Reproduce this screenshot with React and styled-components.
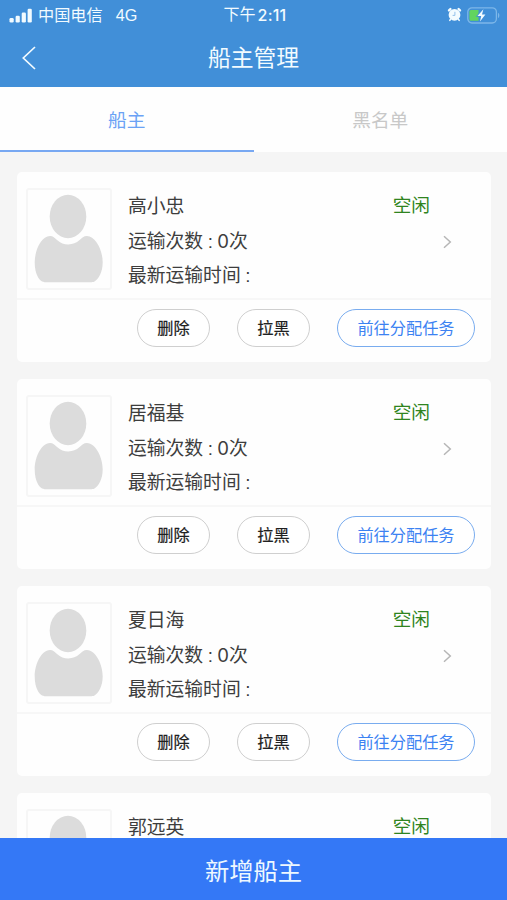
import React from 'react';
import styled, { createGlobalStyle } from 'styled-components';

const GlobalStyle = createGlobalStyle`
  * { box-sizing: border-box; }
  body {
    margin: 0;
    overflow: hidden;
    font-family: "Liberation Sans", "Noto Sans CJK SC", sans-serif;
  }
  button { font: inherit; margin: 0; padding: 0; cursor: pointer; }
`;

const Screen = styled.div`
  width: 100%;
  height: 100vh;
  display: flex;
  flex-direction: column;
  overflow: hidden;
  background: #f5f5f5;
`;

const Header = styled.header`
  flex: none;
  height: 87px;
  background: #418fd8;
  color: #f2fbff;
`;

const StatusBar = styled.div`
  height: 30px;
  padding: 0 7px 0 9px;
  display: grid;
  grid-template-columns: 1fr auto 1fr;
  align-items: center;
`;

const StatusGroup = styled.div`
  display: flex;
  align-items: center;
  justify-content: ${(p) => (p.$end ? 'flex-end' : 'flex-start')};
  gap: ${(p) => (p.$end ? '5px' : '0')};
  font-size: 16.2px;
  line-height: 24px;
  white-space: nowrap;
`;

const Carrier = styled.span`
  margin: 0 13px 0 6px;
`;

const Clock = styled.div`
  display: flex;
  gap: 2px;
  margin-right: -1px;
  font-size: 16px;
  line-height: 24px;
`;

const ClockDigits = styled.span`
  font-family: Inter, sans-serif;
  font-weight: 500;
  letter-spacing: 0.2px;
`;

const NavBar = styled.div`
  height: 56px;
  display: grid;
  grid-template-columns: 1fr auto 1fr;
  align-items: center;
`;

const BackButton = styled.button`
  justify-self: start;
  width: 40px;
  height: 40px;
  margin-left: 9px;
  border: 0;
  background: none;
  color: inherit;
  display: grid;
  place-items: center;
`;

const Title = styled.h1`
  margin: 0;
  font-size: 22.8px;
  font-weight: 400;
  line-height: 32px;
`;

const Tabs = styled.nav`
  flex: none;
  height: 65px;
  display: flex;
  background: #fefefe;
`;

const Tab = styled.button`
  flex: 1;
  border: 0;
  border-bottom: 2px solid ${(p) => (p.$active ? '#78a8f2' : 'transparent')};
  background: none;
  color: ${(p) => (p.$active ? '#6ba2f5' : '#c8c8c8')};
  && { font-size: 18.7px; }
`;

const List = styled.main`
  flex: 1;
  min-height: 0;
  overflow: hidden;
  padding: 20px 16px 0 17px;
  display: flex;
  flex-direction: column;
  gap: 17px;
`;

const Card = styled.article`
  flex: none;
  height: 190px;
  border-radius: 5px;
  background: #fefefe;
`;

const Summary = styled.div`
  height: 128px;
  padding: 16px 39px 0 9px;
  border-bottom: 2px solid #f7f7f7;
  display: flex;
`;

const AvatarFrame = styled.div`
  flex: none;
  width: 86px;
  height: 102px;
  border: 2px solid #f6f6f6;
  border-radius: 3px;
`;

const Info = styled.div`
  flex: 1;
  margin: 2px 0 0 16px;
  color: #3d3d3d;
  font-size: 18.8px;
  line-height: 34px;
  white-space: nowrap;
`;

const Numeric = styled.span`
  font-family: Inter, "Noto Sans CJK SC", sans-serif;
  font-size: 18.5px;
`;

const Colon = styled.span`
  margin: 0 4.5px;
`;

const StatusColumn = styled.div`
  display: flex;
  flex-direction: column;
  align-items: flex-end;
  padding-top: 2px;
`;

const Status = styled.span`
  margin-right: 22px;
  color: #2f8420;
  font-size: 18.7px;
  line-height: 32px;
`;

const Actions = styled.div`
  padding: 9px 16px 0 0;
  display: flex;
  justify-content: flex-end;
  gap: 27px;
`;

const ActionButton = styled.button`
  width: ${(p) => (p.$primary ? '138px' : '73px')};
  height: 38px;
  border: 1.5px solid ${(p) => (p.$primary ? '#79acef' : '#cfcfcf')};
  border-radius: 19px;
  background: #fff;
  color: ${(p) => (p.$primary ? '#3c82f2' : '#202020')};
  -webkit-text-stroke: ${(p) => (p.$primary ? '0' : '0.2px')} currentColor;
  && { font-size: 16.2px; line-height: 24px; }
`;

const AddButton = styled.button`
  flex: none;
  height: 62px;
  border: 0;
  background: #3478f6;
  color: #eef8ff;
  && { font-size: 24.3px; padding-top: 1px; }
`;

const Signal = () => (
  <svg width="23" height="15" viewBox="0 0 23 15" fill="currentColor">
    <rect x="0.5" y="10" width="4.2" height="4.5" rx="1.3" />
    <rect x="6.6" y="7.7" width="4.2" height="6.8" rx="1.3" />
    <rect x="12.7" y="4.4" width="4.2" height="10.1" rx="1.3" />
    <rect x="18.6" y="0.8" width="4.2" height="13.7" rx="1.3" />
  </svg>
);

const Alarm = () => (
  <svg width="15" height="16" viewBox="0 0 15 16">
    <g stroke="currentColor" strokeWidth="2.4" strokeLinecap="round">
      <path d="M2 3.400 3.400 2.100M13 3.400 11.600 2.100" />
      <path d="M3.400 12.500l-.6.9M11.600 12.500l.6.9" strokeWidth="1.500" />
    </g>
    <circle cx="7.500" cy="7.900" r="5.900" fill="currentColor" />
    <path d="M7.900 4.800v3.600H5.600" fill="none" stroke="#8abce9" strokeWidth="0.900" />
  </svg>
);

const Battery = () => (
  <svg width="33" height="17" viewBox="0 0 33 17">
    <rect x="0.8" y="0.8" width="28.6" height="15.2" rx="4.2" fill="none" stroke="#7db7e9" strokeWidth="1.3" />
    <path d="M31 5.8c1.8.8 1.8 4.5 0 5.3z" fill="#7db7e9" />
    <path d="M4 3h7.5v10.8H4a1.6 1.6 0 0 1-1.6-1.6V4.6A1.6 1.6 0 0 1 4 3z" fill="#62d45f" />
    <path d="M16.4 2.200 10.500 9h3.700l-1.200 5.500L18.400 7.600h-3.400z" fill="#f2fbff" stroke="#418fd8" strokeWidth="1.6" paintOrder="stroke" />
  </svg>
);

const BackIcon = () => (
  <svg width="16" height="24" viewBox="0 0 16 24" fill="none" stroke="currentColor" strokeWidth="1.7">
    <path d="M14 1 2.3 12 14 23" />
  </svg>
);

const Person = () => (
  <svg width="82" height="98" viewBox="0 0 82 98" fill="#dcdcdc">
    <ellipse cx="40" cy="26.5" rx="18.3" ry="21.7" />
    <path d="M22 46c3.2 0 4.6 1.7 7 4 3.6 3.2 7 4.4 11.3 4.4 4.4 0 8-1.5 11.3-4.4 2.5-2.3 4-4 7.3-4 8.8 0 15.8 14.5 15.8 26.3 0 9.5-3.8 16.8-8.2 19.2-1.3.6-2.5.8-4.1.8H18.1c-4.2 0-6.5-2.1-8.3-5.5-1.8-3.2-3.1-8.1-3.1-14.5C6.7 60.500 13.2 46 22 46z" />
  </svg>
);

const ArrowIcon = styled.svg`
  width: 9px;
  height: 14px;
  margin-top: 13px;
  fill: none;
  stroke: #b6b6b6;
  stroke-width: 1.5;
`;

const owners = ['高小忠', '居福基', '夏日海', '郭远英'];

const OwnerCard = ({ name }) => (
  <Card>
    <Summary>
      <AvatarFrame><Person /></AvatarFrame>
      <Info>
        <div>{name}</div>
        <div>运输次数<Colon>:</Colon><Numeric>0</Numeric>次</div>
        <div>最新运输时间<Colon>:</Colon></div>
      </Info>
      <StatusColumn>
        <Status>空闲</Status>
        <ArrowIcon viewBox="0 0 9 14"><path d="M1 1.300 7.300 7 1 12.700" /></ArrowIcon>
      </StatusColumn>
    </Summary>
    <Actions>
      <ActionButton>删除</ActionButton>
      <ActionButton>拉黑</ActionButton>
      <ActionButton $primary>前往分配任务</ActionButton>
    </Actions>
  </Card>
);

export default function App() {
  return (
    <Screen>
      <GlobalStyle />
      <Header>
        <StatusBar>
          <StatusGroup>
            <Signal />
            <Carrier>中国电信</Carrier>
            <span>4G</span>
          </StatusGroup>
          <Clock>
            <span>下午</span>
            <ClockDigits>2:11</ClockDigits>
          </Clock>
          <StatusGroup $end>
            <Alarm />
            <Battery />
          </StatusGroup>
        </StatusBar>
        <NavBar>
          <BackButton aria-label="返回"><BackIcon /></BackButton>
          <Title>船主管理</Title>
        </NavBar>
      </Header>
      <Tabs>
        <Tab $active>船主</Tab>
        <Tab>黑名单</Tab>
      </Tabs>
      <List>
        {owners.map((name) => <OwnerCard key={name} name={name} />)}
      </List>
      <AddButton>新增船主</AddButton>
    </Screen>
  );
}
